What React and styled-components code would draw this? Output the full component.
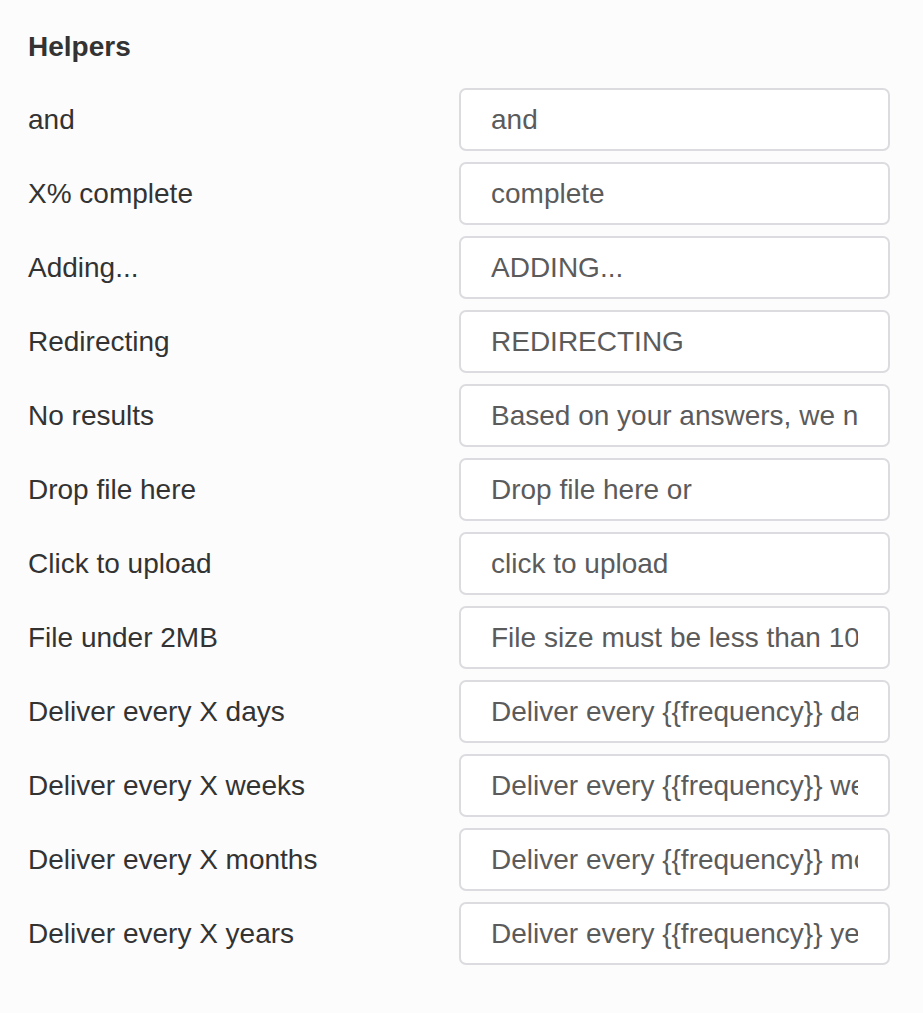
import React from "react";
import styled, { createGlobalStyle } from "styled-components";

const Global = createGlobalStyle`
  html, body { margin: 0; padding: 0; background: #fcfcfc; }
  body { font-family: "Liberation Sans", Arial, sans-serif; }
`;

const Page = styled.div`
  padding: 31px 33px 40px 28px;
  color: #333333;
`;

const Heading = styled.h2`
  margin: 0 0 25px 0;
  font-size: 28px;
  line-height: 32px;
  font-weight: 700;
  color: #333333;
`;

const List = styled.div`
  display: grid;
  grid-template-columns: 431px 1fr;
  row-gap: 11px;
  align-items: center;
`;

const Label = styled.label`
  font-size: 28px;
  line-height: 32px;
  color: #333333;
`;

const Field = styled.input`
  box-sizing: border-box;
  width: 100%;
  height: 63px;
  margin: 0;
  padding: 0 30px;
  border: 2px solid #dcdce0;
  border-radius: 7px;
  background: #ffffff;
  font-family: "Liberation Sans", Arial, sans-serif;
  font-size: 28px;
  color: #5b5b5b;
  outline: none;
`;

const rows = [
  ["and", "and"],
  ["X% complete", "complete"],
  ["Adding...", "ADDING..."],
  ["Redirecting", "REDIRECTING"],
  ["No results", "Based on your answers, we notice you have no results"],
  ["Drop file here", "Drop file here or"],
  ["Click to upload", "click to upload"],
  ["File under 2MB", "File size must be less than 10MB"],
  ["Deliver every X days", "Deliver every {{frequency}} days"],
  ["Deliver every X weeks", "Deliver every {{frequency}} weeks"],
  ["Deliver every X months", "Deliver every {{frequency}} months"],
  ["Deliver every X years", "Deliver every {{frequency}} years"],
];

export default function App() {
  return (
    <>
      <Global />
      <Page>
        <Heading>Helpers</Heading>
        <List>
          {rows.map(([label, value], i) => (
            <React.Fragment key={i}>
              <Label htmlFor={`f${i}`}>{label}</Label>
              <Field id={`f${i}`} value={value} readOnly />
            </React.Fragment>
          ))}
        </List>
      </Page>
    </>
  );
}
